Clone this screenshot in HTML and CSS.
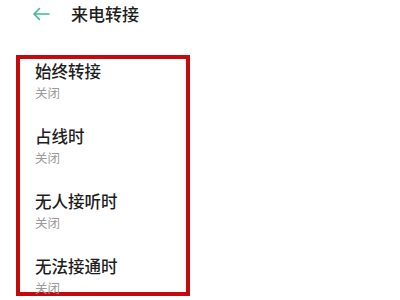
FILE: index.html
```html
<!DOCTYPE html>
<html lang="zh-CN">
<head>
    <meta charset="UTF-8">
    <meta name="viewport" content="width=device-width, initial-scale=1.0">
    <title>来电转接</title>
    <link rel="stylesheet" href="styles.css">
</head>
<body>

<div class="header">
    <button class="back-btn">
        <svg width="18" height="14" viewBox="0 0 18 14">
            <path d="M17 7H2M7.5 1.5L2 7l5.5 5.5" fill="none" stroke="#3dbb8c" stroke-width="1.6" stroke-linecap="round" stroke-linejoin="round"/>
        </svg>
    </button>
    <div class="title">来电转接</div>
</div>

<div class="list">
    <div class="item">
        <div class="item-title">始终转接</div>
        <div class="item-sub">关闭</div>
    </div>
    <div class="item">
        <div class="item-title">占线时</div>
        <div class="item-sub">关闭</div>
    </div>
    <div class="item">
        <div class="item-title">无人接听时</div>
        <div class="item-sub">关闭</div>
    </div>
    <div class="item">
        <div class="item-title">无法接通时</div>
        <div class="item-sub">关闭</div>
    </div>
</div>

</body>
</html>
```

FILE: styles.css
```css
* { margin: 0; padding: 0; box-sizing: border-box; }
body {
    font-family: "Noto Sans CJK SC", "Noto Sans", sans-serif;
    background: #fff;
    color: #222;
    width: 400px;
    height: 300px;
    overflow: hidden;
}
.header {
    display: flex;
    align-items: center;
    height: 27px;
    padding-left: 32px;
    margin-bottom: 28px;
}
.back-btn { background: none; border: none; display: flex; cursor: pointer; }
.title { font-size: 17px; line-height: 20px; margin-left: 21px; color: #1e1e1e; font-weight: 500; }
.list {
    margin-left: 16px;
    width: 174px;
    height: 241px;
    border: 4px solid #c50a0e;
    padding: 2px 0 0 15px;
    display: flex;
    flex-direction: column;
    gap: 25px;
}
.item-title { font-size: 16.5px; line-height: 20px; font-weight: 500; color: #1e1e1e; }
.item-sub { font-size: 12.5px; line-height: 16px; color: #9a9a9a; margin-top: 4px; }
```
